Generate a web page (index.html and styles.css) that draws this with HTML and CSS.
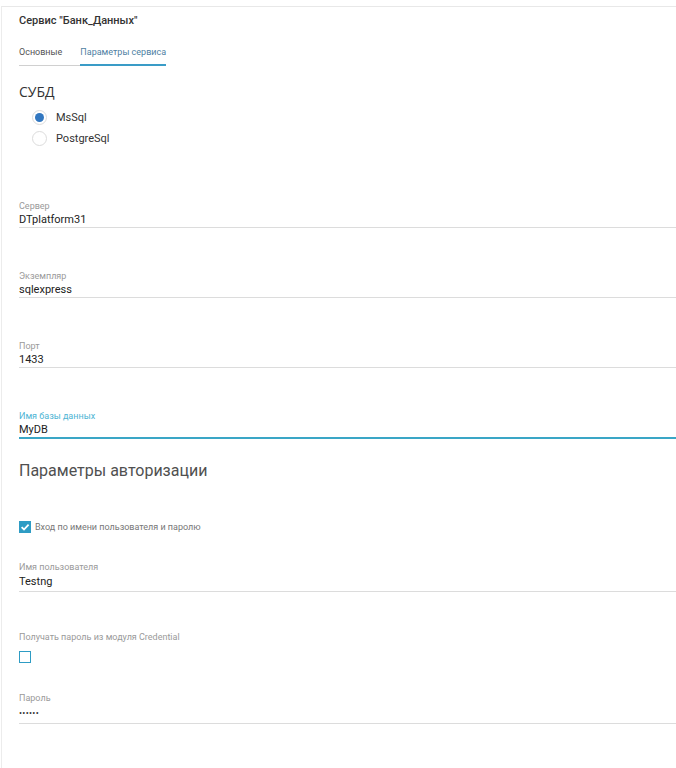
FILE: index.html
```html
<!DOCTYPE html>
<html lang="ru">
<head>
<meta charset="utf-8">
<title>Сервис "Банк_Данных"</title>
<link rel="stylesheet" href="styles.css">
</head>
<body>
<div class="panel">
  <div class="title">Сервис "Банк_Данных"</div>
  <div class="tabs">
    <div class="tab">Основные</div>
    <div class="tab active">Параметры сервиса</div>
  </div>

  <div class="section-title">СУБД</div>
  <div class="radios">
    <div class="radio-row"><span class="radio checked"></span><span class="radio-label">MsSql</span></div>
    <div class="radio-row"><span class="radio"></span><span class="radio-label">PostgreSql</span></div>
  </div>

  <div class="field first">
    <div class="label">Сервер</div>
    <div class="value">DTplatform31</div>
  </div>
  <div class="field">
    <div class="label">Экземпляр</div>
    <div class="value">sqlexpress</div>
  </div>
  <div class="field">
    <div class="label">Порт</div>
    <div class="value">1433</div>
  </div>
  <div class="field focused">
    <div class="label">Имя базы данных</div>
    <div class="value">MyDB</div>
  </div>

  <div class="subheading">Параметры авторизации</div>

  <div class="check-row">
    <span class="checkbox checked"><svg viewBox="0 0 12 12" width="12" height="12"><path d="M2.6 6.2 L5 8.5 L9.6 3.6" fill="none" stroke="#fff" stroke-width="1.8"/></svg></span>
    <span class="check-label">Вход по имени пользователя и паролю</span>
  </div>

  <div class="field user">
    <div class="label">Имя пользователя</div>
    <div class="value">Testng</div>
  </div>

  <div class="cred">
    <div class="label">Получать пароль из модуля Credential</div>
    <span class="checkbox"></span>
  </div>

  <div class="field pass">
    <div class="label">Пароль</div>
    <div class="value dots">••••••</div>
  </div>
</div>
</body>
</html>
```

FILE: styles.css
```css
html, body {
  margin: 0;
  padding: 0;
  background: #fff;
}
body {
  font-family: Roboto, "Liberation Sans", sans-serif;
  color: #222;
}
.panel {
  margin: 6px 0 0 1px;
  border-top: 1px solid #e8e8e8;
  border-left: 1px solid #ececec;
  padding: 7px 0 60px 17px;
  min-height: 700px;
}
.title {
  font-size: 11px;
  font-weight: 500;
  line-height: 14px;
  color: #333;
}
.tabs {
  display: inline-flex;
  gap: 18px;
  margin-top: 18px;
  border-bottom: 1px solid #d0d0d0;
}
.tab {
  font-size: 9px;
  line-height: 12px;
  padding-bottom: 7px;
  color: #555;
}
.tab.active {
  color: #4f7fa3;
  border-bottom: 2px solid #3a9cc7;
  margin-bottom: -1px;
  padding-bottom: 6px;
}
.section-title {
  font-family: "Open Sans", Roboto, sans-serif;
  font-size: 14px;
  font-weight: 500;
  line-height: 18px;
  color: #333;
  margin-top: 17px;
}
.radios {
  margin-top: 6px;
  padding-left: 13px;
}
.radio-row {
  display: flex;
  align-items: center;
  height: 21px;
}
.radio {
  width: 15px;
  height: 15px;
  border: 1px solid #dcdcdc;
  border-radius: 50%;
  box-sizing: border-box;
  display: flex;
  align-items: center;
  justify-content: center;
}
.radio.checked::after {
  content: "";
  width: 9px;
  height: 9px;
  border-radius: 50%;
  background: #3277c0;
}
.radio-label {
  font-size: 11px;
  margin-left: 9px;
  color: #333;
}
.field {
  margin-top: 43px;
  border-bottom: 1px solid #dcdcdc;
}
.field.first {
  margin-top: 52px;
}
.label {
  font-size: 9px;
  line-height: 11px;
  color: #9a9a9a;
}
.value {
  font-size: 11px;
  line-height: 14px;
  margin-top: 1px;
  color: #222;
}
.field.focused {
  border-bottom: 2px solid #3aa6c6;
}
.field.focused .label {
  color: #4cb4d4;
}
.subheading {
  font-size: 16px;
  line-height: 20px;
  color: #505050;
  margin-top: 22px;
}
.check-row {
  display: flex;
  align-items: center;
  margin-top: 40px;
  height: 12px;
}
.checkbox {
  width: 12px;
  height: 12px;
  box-sizing: border-box;
  border: 1px solid #2e9cc4;
  display: block;
}
.checkbox.checked {
  background: #2e9cc4;
  border: none;
}
.checkbox svg {
  display: block;
}
.check-label {
  font-size: 9px;
  color: #777;
  margin-left: 4px;
}
.field.user {
  margin-top: 29px;
  padding-bottom: 2px;
}
.field.user .value {
  margin-top: 2px;
}
.cred {
  margin-top: 40px;
}
.cred .checkbox {
  margin-top: 8px;
}
.field.pass {
  margin-top: 30px;
  padding-bottom: 3px;
}
.field.pass .value {
  margin-top: 2px;
}
.dots {
  font-size: 9px;
  letter-spacing: 0.3px;
  color: #333;
}
```
